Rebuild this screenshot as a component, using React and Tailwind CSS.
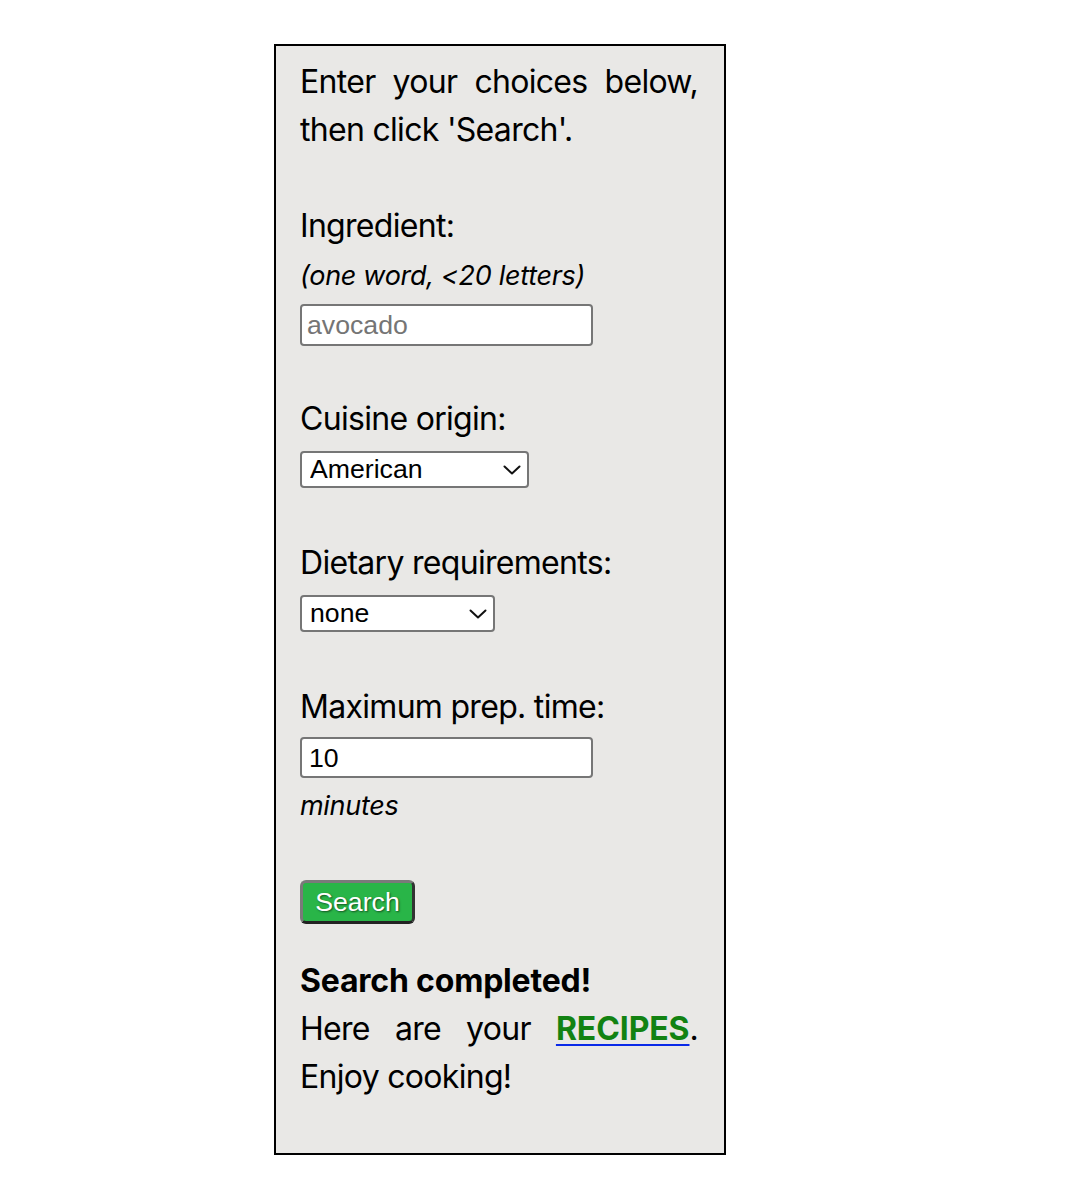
import React from "react";

function Chevron() {
  return (
    <svg
      className="pointer-events-none absolute right-[8px] top-1/2 -translate-y-1/2"
      width="18"
      height="10"
      viewBox="0 0 18 10"
      fill="none"
    >
      <path d="M1.5 1.5 L9 8.5 L16.5 1.5" stroke="#111" strokeWidth="2" strokeLinecap="round" strokeLinejoin="round" />
    </svg>
  );
}

export default function App() {
  const body = { fontFamily: "Inter, 'Noto Sans', sans-serif" };
  const arial = { fontFamily: "'Liberation Sans', Arial, sans-serif" };
  return (
    <div className="min-h-[1200px] bg-white">
      <div
        className="ml-[274px] mt-[44px] w-[452px] border-2 border-black bg-[#e9e8e6] pl-[24px] pr-[26px] pt-[12px] pb-[52px] text-[32px] leading-[48px] text-black tracking-[-0.7px]"
        style={body}
      >
        <p className="text-justify">Enter your choices below, then click 'Search'.</p>

        <div className="mt-[48px]">Ingredient:</div>
        <div className="mt-[2px] text-[27px] italic tracking-[-0.3px]">(one word, &lt;20 letters)</div>
        <input
          type="text"
          placeholder="avocado"
          className="mt-[4px] block h-[42px] w-[293px] rounded-[4px] border-2 border-[#767676] bg-white pl-[5px] text-[26.67px] tracking-normal text-black placeholder:text-[#757575] outline-none"
          style={arial}
        />

        <div className="mt-[49px]">Cuisine origin:</div>
        <div className="relative mt-[8px] w-[229px]">
          <select
            defaultValue="American"
            className="block h-[37px] w-[229px] appearance-none rounded-[4px] border-2 border-[#767676] bg-white pl-[8px] text-[26.67px] leading-[33px] tracking-normal text-black outline-none"
            style={arial}
          >
            <option>American</option>
            <option>Italian</option>
            <option>Mexican</option>
          </select>
          <Chevron />
        </div>

        <div className="mt-[51px]">Dietary requirements:</div>
        <div className="relative mt-[8px] w-[195px]">
          <select
            defaultValue="none"
            className="block h-[37px] w-[195px] appearance-none rounded-[4px] border-2 border-[#767676] bg-white pl-[8px] text-[26.67px] leading-[33px] tracking-normal text-black outline-none"
            style={arial}
          >
            <option>none</option>
            <option>vegetarian</option>
            <option>vegan</option>
          </select>
          <Chevron />
        </div>

        <div className="mt-[51px]">Maximum prep. time:</div>
        <input
          type="text"
          defaultValue="10"
          className="mt-[6px] block h-[41px] w-[293px] rounded-[4px] border-2 border-[#767676] bg-white pl-[7px] text-[26.67px] tracking-normal text-black outline-none"
          style={arial}
        />
        <div className="mt-[4px] text-[27px] italic tracking-[-0.3px]">minutes</div>

        <button
          type="button"
          className="mt-[50px] block h-[44px] w-[115px] rounded-[6px] border-[3px] border-t-[#7a7a7a] border-l-[#7a7a7a] border-r-[#333] border-b-[#222] bg-[#29b548] text-[26.67px] leading-[36px] tracking-normal text-white [text-shadow:1px_1px_2px_rgba(0,0,0,0.55)]"
          style={arial}
        >
          Search
        </button>

        <div className="mt-[33px] font-bold tracking-[-0.2px]">Search completed!</div>
        <p className="text-justify">
          Here are your{" "}
          <a href="#" className="font-bold tracking-[-0.1px] text-[#128212] underline decoration-[#0a2ae8] decoration-[2px] underline-offset-[4px]">
            RECIPES
          </a>
          . Enjoy cooking!
        </p>
      </div>
    </div>
  );
}
